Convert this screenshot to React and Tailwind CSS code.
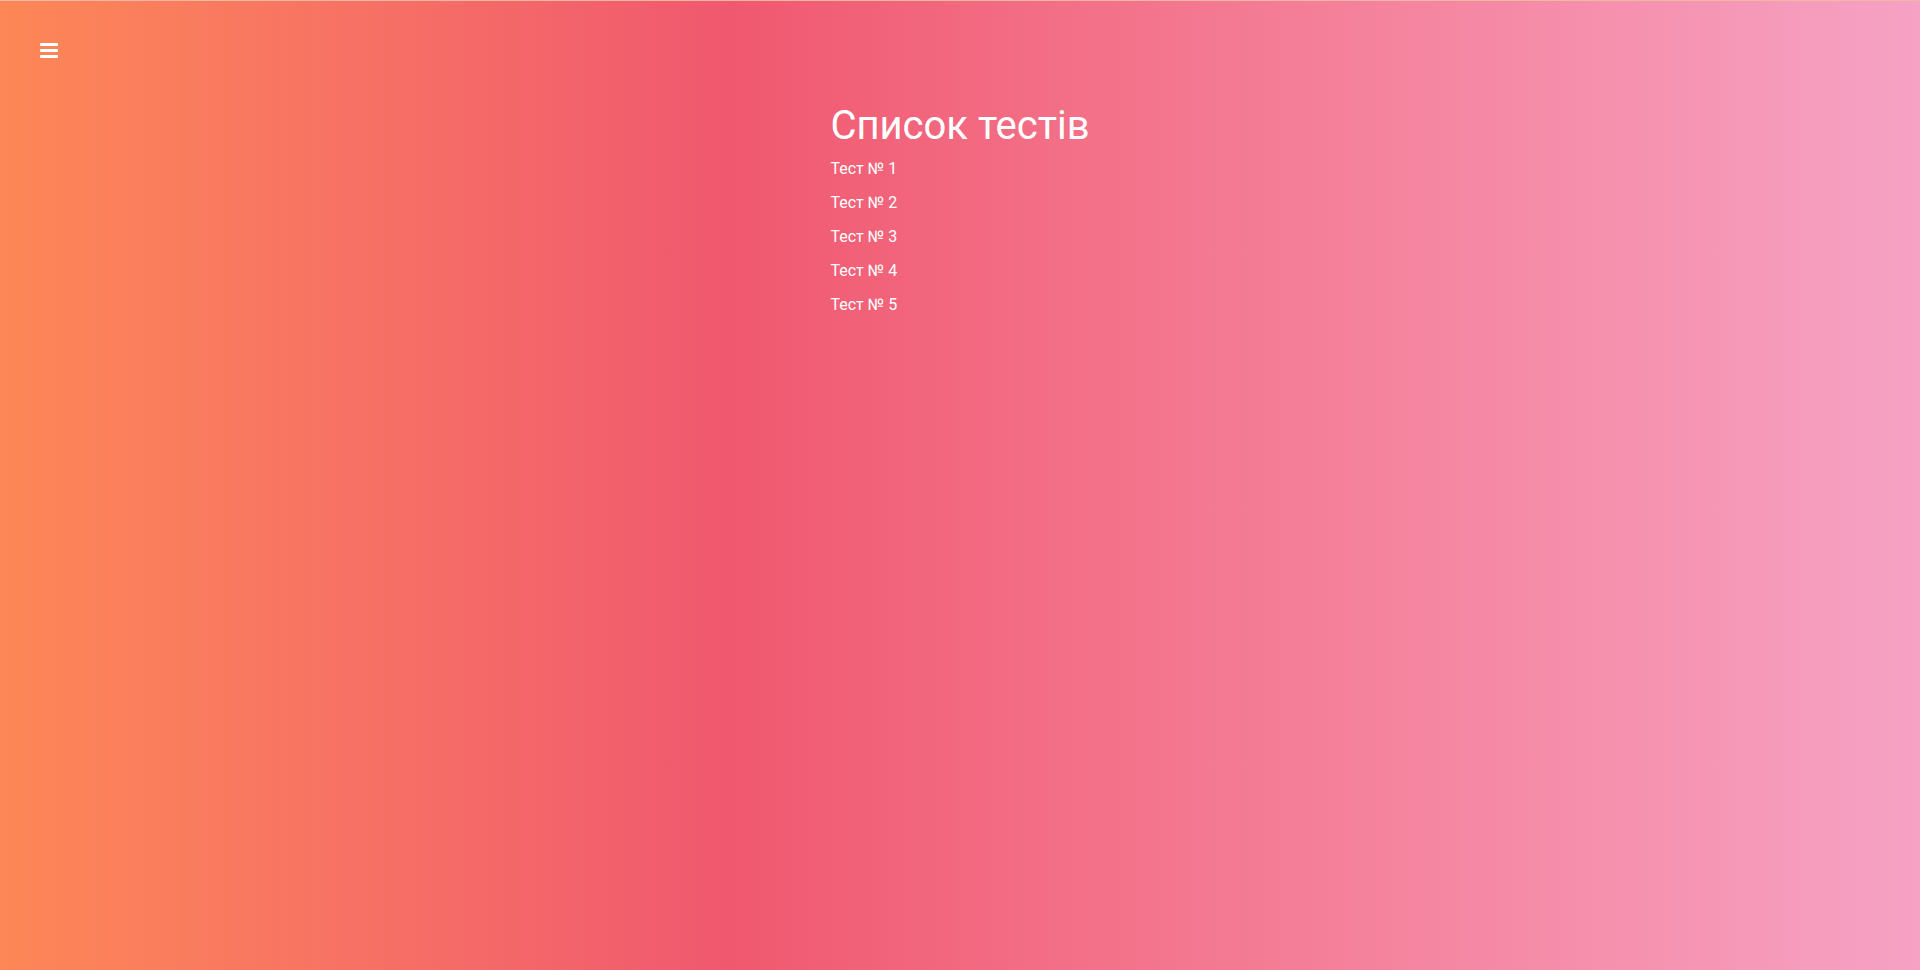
export default function App() {
    const tests = [1, 2, 3, 4, 5];

    return (
        <div
            className="min-h-[970px] w-full bg-gradient-to-r from-[#fd8756] via-[#f0586f] via-[38%] to-[#f6a2c4] text-white border-t border-[#f0b8a0]"
            style={{ fontFamily: "Roboto, 'Noto Sans', sans-serif" }}
        >
            <header className="pl-10 pt-[42px] h-[60px]">
                <button className="block" aria-label="menu">
                    <svg width="18" height="16" viewBox="0 0 18 16">
                        <rect x="0" y="0" width="18" height="3" rx="1" fill="#fff" />
                        <rect x="0" y="6" width="18" height="3" rx="1" fill="#fff" />
                        <rect x="0" y="12" width="18" height="3" rx="1" fill="#fff" />
                    </svg>
                </button>
            </header>
            <main className="mx-auto w-fit pt-[41px]">
                <h1 className="text-[40px] leading-[48px] font-normal">Список тестів</h1>
                <ul className="mt-[2px]">
                    {tests.map((n) => (
                        <li key={n} className="text-base leading-[34px]">
                            Тест № {n}
                        </li>
                    ))}
                </ul>
            </main>
        </div>
    );
}
